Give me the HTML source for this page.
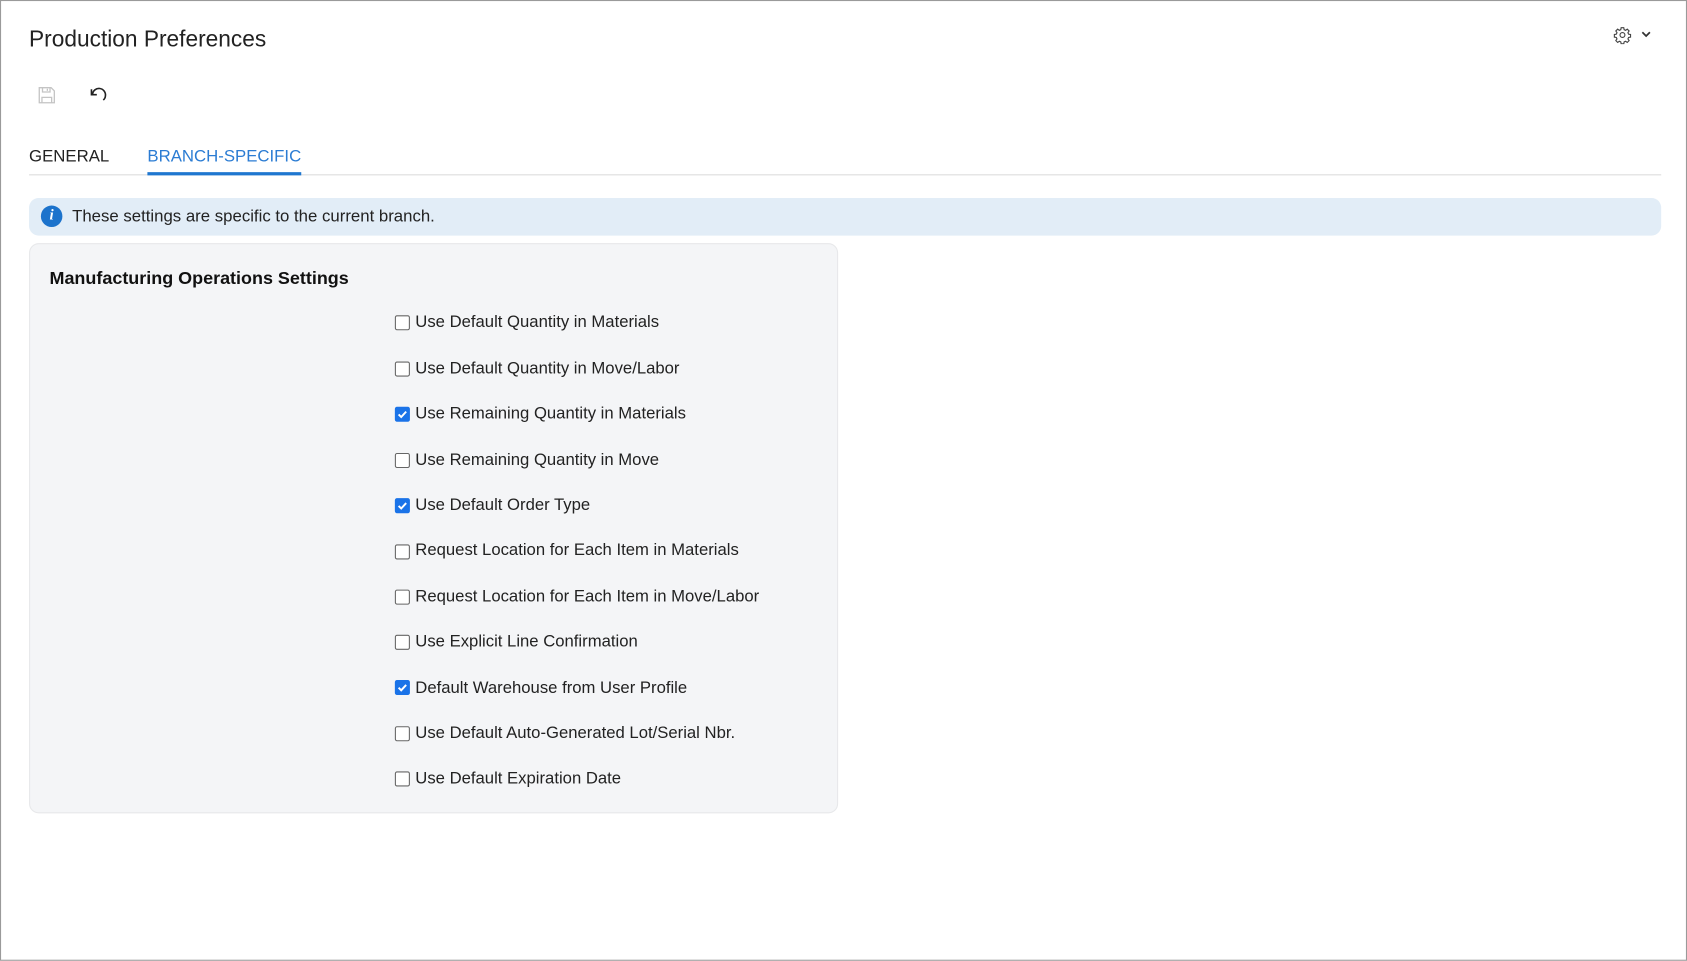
<!DOCTYPE html>
<html><head><meta charset="utf-8"><style>
html,body{margin:0;padding:0;background:#fff;overflow:hidden;width:1687px;height:961px}
#w{position:absolute;left:0;top:0;width:1568px;height:893px;transform:scale(1.0759);transform-origin:0 0;font-family:"Liberation Sans",Arial,sans-serif;color:#222}
.frame{position:absolute;left:0;top:0;width:1566px;height:891px;border:1px solid #9a9a9a}
.abs{position:absolute}
.title{left:27px;top:25px;font-size:21.1px;line-height:24px;color:#222}
.tab{top:137px;font-size:15.6px;line-height:18px}
.cb{position:absolute;left:367px;width:12px;height:12px;border:1px solid #666;border-radius:2px;background:#fff}
.cb.on{background:#1a73e8;border-color:#1a73e8}
.lbl{position:absolute;left:386px;font-size:15.5px;line-height:17px;color:#222;white-space:nowrap}
</style></head><body><div id="w">
<div class="frame"></div>
<div class="abs title">Production Preferences</div>
<svg class="abs" style="left:1499px;top:24px" width="18" height="17" viewBox="0 0 24 24" fill="none" stroke="#444" stroke-width="1.5"><circle cx="12" cy="12" r="3.2"/><path d="M10.3 2.5h3.4l.5 2.6 1.9.8 2.2-1.5 2.4 2.4-1.5 2.2.8 1.9 2.6.5v3.4l-2.6.5-.8 1.9 1.5 2.2-2.4 2.4-2.2-1.5-1.9.8-.5 2.6h-3.4l-.5-2.6-1.9-.8-2.2 1.5-2.4-2.4 1.5-2.2-.8-1.9-2.6-.5v-3.4l2.6-.5.8-1.9-1.5-2.2 2.4-2.4 2.2 1.5 1.9-.8z"/></svg>
<svg class="abs" style="left:1525px;top:28px" width="10" height="8" viewBox="0 0 10 8"><path d="M1.5 2l3.5 3.5 3.5-3.5" stroke="#333" stroke-width="1.6" fill="none"/></svg>
<svg class="abs" style="left:35px;top:80px" width="17" height="17" viewBox="0 0 17 17" fill="none" stroke="#c4c4c4" stroke-width="1.2"><path d="M1.5 1.5h11l3 3v11h-14z"/><path d="M4.5 1.5v4h7v-4M9 2.5v2M4 15.5v-5h9v5"/></svg>
<svg class="abs" style="left:83px;top:80px" width="19" height="16" viewBox="0 0 19 16" fill="none" stroke="#222" stroke-width="1.5"><path d="M3 7.5a6 6 0 1 1 12 1.5 6 6 0 0 1-2 4"/><path d="M2 3v5h5"/></svg>
<div class="abs tab" style="left:27px">GENERAL</div>
<div class="abs tab" style="left:137px;color:#2b7cd3">BRANCH-SPECIFIC</div>
<div class="abs" style="left:27px;top:162px;width:1517px;height:1px;background:#dcdcdc"></div>
<div class="abs" style="left:137px;top:160px;width:143px;height:3px;background:#1f77d0"></div>
<div class="abs" style="left:27px;top:184px;width:1517px;height:35px;background:#e2edf7;border-radius:9px"></div>
<div class="abs" style="left:38px;top:191px;width:20px;height:20px;border-radius:50%;background:#1c73cc;color:#fff;font:italic bold 14px/20px 'Liberation Serif',serif;text-align:center">i</div>
<div class="abs" style="left:67px;top:193px;font-size:15.6px;line-height:18px">These settings are specific to the current branch.</div>
<div class="abs" style="left:27px;top:226px;width:750px;height:528px;background:#f4f5f7;border:1px solid #e7e8ea;border-radius:9px"></div>
<div class="abs" style="left:46px;top:249px;font-size:16.7px;line-height:19px;font-weight:bold;color:#111">Manufacturing Operations Settings</div>

<div class="cb" style="top:293px"></div><div class="lbl" style="top:291px">Use Default Quantity in Materials</div>
<div class="cb" style="top:336px"></div><div class="lbl" style="top:334px">Use Default Quantity in Move/Labor</div>
<div class="cb on" style="top:378px"><svg width="12" height="12" viewBox="0 0 12 12" style="display:block"><path d="M2.5 6.2l2.4 2.4 4.6-5" stroke="#fff" stroke-width="1.8" fill="none"/></svg></div><div class="lbl" style="top:376px">Use Remaining Quantity in Materials</div>
<div class="cb" style="top:421px"></div><div class="lbl" style="top:419px">Use Remaining Quantity in Move</div>
<div class="cb on" style="top:463px"><svg width="12" height="12" viewBox="0 0 12 12" style="display:block"><path d="M2.5 6.2l2.4 2.4 4.6-5" stroke="#fff" stroke-width="1.8" fill="none"/></svg></div><div class="lbl" style="top:461px">Use Default Order Type</div>
<div class="cb" style="top:506px"></div><div class="lbl" style="top:503px">Request Location for Each Item in Materials</div>
<div class="cb" style="top:548px"></div><div class="lbl" style="top:546px">Request Location for Each Item in Move/Labor</div>
<div class="cb" style="top:590px"></div><div class="lbl" style="top:588px">Use Explicit Line Confirmation</div>
<div class="cb on" style="top:632px"><svg width="12" height="12" viewBox="0 0 12 12" style="display:block"><path d="M2.5 6.2l2.4 2.4 4.6-5" stroke="#fff" stroke-width="1.8" fill="none"/></svg></div><div class="lbl" style="top:631px">Default Warehouse from User Profile</div>
<div class="cb" style="top:675px"></div><div class="lbl" style="top:673px">Use Default Auto-Generated Lot/Serial Nbr.</div>
<div class="cb" style="top:717px"></div><div class="lbl" style="top:715px">Use Default Expiration Date</div>
</div></body></html>
